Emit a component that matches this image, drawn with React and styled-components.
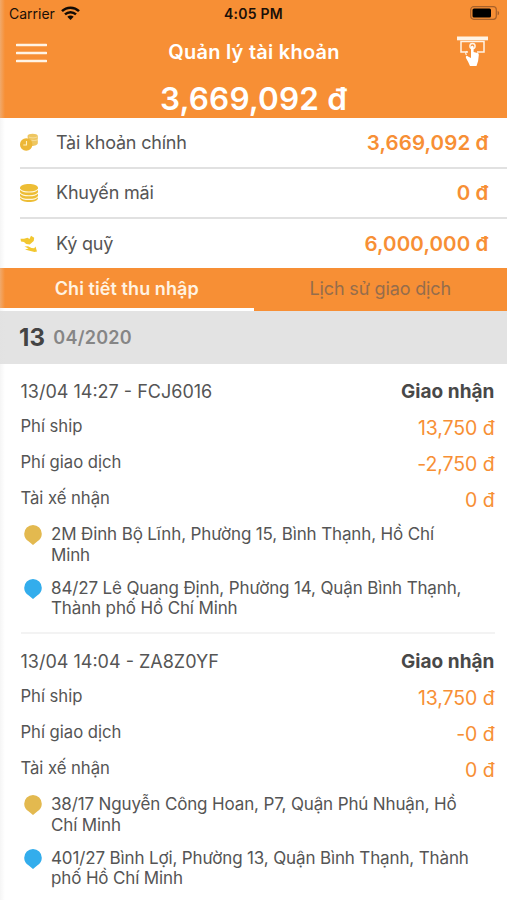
import React from 'react'
import styled, { createGlobalStyle, css } from 'styled-components'

const GlobalStyle = createGlobalStyle`
  * {
    box-sizing: border-box;
  }

  body {
    margin: 0;
    background: #fff;
    color: #555;
    font-family: Inter, Roboto, "Liberation Sans", sans-serif;
    -webkit-font-smoothing: antialiased;
  }
`;

const orange = '#f78f35'

const Screen = styled.div`
  position: relative;
  width: 507px;
  height: 900px;
  overflow: hidden;
  background: #fff;
`;

/* shadow of the closed side drawer */
const DrawerEdge = styled.div`
  position: absolute;
  top: 0;
  left: 0;
  width: 5px;
  height: 100%;
  background: linear-gradient(90deg, rgba(225, 225, 225, 0.32), rgba(225, 225, 225, 0));
`;

const Header = styled.header`
  height: 118px;
  background: ${orange};
  color: #fff;
`;

const StatusBar = styled.div`
  display: grid;
  grid-template-columns: 1fr auto 1fr;
  align-items: center;
  height: 27px;
  padding: 0 7px 0 9px;
  color: #1a1008;
  font-size: 14px;

  .carrier {
    display: flex;
    align-items: center;
    gap: 6px;
  }

  .battery {
    justify-self: end;
  }

  strong {
    margin-right: 2px;
    font-weight: 600;
    font-size: 14px;
    letter-spacing: 0.25px;
  }

  svg {
    display: block;
    margin-top: -1px;
  }
`;

const NavBar = styled.div`
  display: grid;
  grid-template-columns: 1fr auto 1fr;
  align-items: center;
  height: 49px;
  padding: 0 19px 0 16px;

  h1 {
    margin: 0 0 0 4px;
    font-size: 20px;
    font-weight: 600;
    line-height: 24px;
    letter-spacing: 0.25px;
  }

  svg {
    display: block;
  }

  svg:first-child {
    margin-top: 2px;
  }

  svg:last-child {
    justify-self: end;
  }
`;

const Total = styled.div`
  line-height: 45px;
  font-size: 31.5px;
  font-weight: 600;
  letter-spacing: 0.15px;
  text-align: center;
`;

const Wallets = styled.section`
  height: 150px;
`;

const WalletRow = styled.div`
  display: flex;
  align-items: center;
  height: ${(p) => (p.$last ? 49 : 50.5)}px;
  margin-left: 20px;
  padding-right: 18.5px;
  border-bottom: ${(p) => (p.$last ? 'none' : '2px solid #e1e1e1')};

  svg {
    flex: none;
    margin-right: 18px;
  }

  .name {
    flex: 1;
    font-size: 18px;
    letter-spacing: -0.2px;
  }

  .amount {
    color: ${orange};
    font-size: 20.5px;
    font-weight: 600;
    letter-spacing: 0.1px;
  }
`;

const Tabs = styled.nav`
  display: flex;
  height: 43px;
  background: ${orange};
`;

const Tab = styled.div`
  flex: 1;
  text-align: center;
  line-height: 42px;
  font-size: 18px;
  letter-spacing: -0.15px;
  color: #956d4c;
  border-bottom: 3px solid transparent;

  ${(p) => p.$active && css`
    color: #fff3e2;
    font-weight: 600;
    letter-spacing: 0.08px;
    border-color: #fff;
  `}
`;

const DateBar = styled.div`
  display: flex;
  align-items: center;
  gap: 8px;
  height: 53px;
  padding-left: 19px;
  line-height: 53px;
  background: #e3e3e3;
  color: #868686;
  font-size: 18px;
  font-weight: 600;
  letter-spacing: 0.25px;

  b {
    color: #444;
    font-size: 24px;
    font-weight: 700;
  }
`;

const Trip = styled.article`
  height: 270px;
  margin: 0 12.5px 0 20.5px;
  padding-top: 9px;
  border-bottom: 2px solid #f3f3f3;
`;

const Line = styled.div`
  display: flex;
  justify-content: space-between;
  align-items: center;
  height: 36px;
  padding-bottom: 2px;
  font-size: 16.7px;
  letter-spacing: -0.04px;

  span:last-child {
    color: ${orange};
    font-size: 19.5px;
    letter-spacing: -0.1px;
    padding-top: 3px;
  }
`;

const TripHead = styled(Line)`
  padding-bottom: 0;
  font-size: 18px;
  letter-spacing: 0;

  span:last-child {
    color: #484848;
    font-weight: 700;
    font-size: 19px;
    letter-spacing: 0.05px;
    padding-top: 1px;
  }
`;

const Stop = styled.div`
  display: flex;
  gap: 9.5px;
  height: 53.5px;
  padding: 7px 0 0 3px;
  font-size: 17px;
  line-height: 20.5px;
  letter-spacing: -0.14px;
  white-space: nowrap;

  svg {
    flex: none;
    margin-top: 1px;
  }
`;

const WifiIcon = () => (
  <svg width="19" height="14" viewBox="0 0 19 14">
    <g fill="none" stroke="#120b05" strokeWidth="2.5">
      <path d="M1 5.200C5.700.6 13.300.6 18 5.200" />
      <path d="M4 8.400C7.200 5.500 11.800 5.500 15 8.400" />
    </g>
    <path d="M6.300 10.800C8.200 9 10.800 9 12.700 10.800L9.500 14z" fill="#120b05" />
  </svg>
)

const BatteryIcon = () => (
  <svg width="30" height="14" viewBox="0 0 30 14">
    <rect x=".7" y=".7" width="25.600" height="12.600" rx="3" fill="none" stroke="#a8612a" strokeWidth="1.200" />
    <rect x="2.500" y="2.500" width="18.500" height="9" rx="1.500" fill="#000" />
    <path d="M27.600 4.700c2 .8 2 3.800 0 4.600z" fill="#a8612a" />
  </svg>
)

const MenuIcon = () => (
  <svg width="31" height="20" viewBox="0 0 31 20" stroke="#fff4e6" strokeWidth="2.600" strokeLinecap="round">
    <path d="M1 2h29M1 10h29M1 18h29" />
  </svg>
)

const WithdrawIcon = () => (
  <svg width="31" height="31" viewBox="0 0 31 31">
    <path d="M0 .5h31v3.800H0z" fill="#fff4e6" />
    <path d="M11 16H4V5.500h23V16h-7" fill="none" stroke="#fff4e6" strokeWidth="1.500" />
    <circle cx="15.500" cy="10" r="2.600" fill="none" stroke="#fff4e6" strokeWidth="1.500" />
    <path d="M14 11c0-1.700 2.600-1.700 2.600 0v5l4 1c1 .3 1.300 1 1.200 2l-.7 6-1.600 5h-6.500l-1.800-4-2.200-4c-.7-2 1-2.300 2-1.500l3 1.500z" fill="#fff" />
    <path d="M9.500 19c-1.300-1.500-1-3 .5-3.800" fill="none" stroke="#fff4e6" strokeWidth="1.200" />
  </svg>
)

const MainIcon = () => (
  <svg width="18" height="18" viewBox="0 0 18 18">
    <path d="M7.500 3c0-3 10.300-3 10.300 0v7c0 2-3 3-6 3L8 8z" fill="#eec661" />
    <path d="M9 4c2 1.200 6 1.200 8 0M11.500 7.200c2 .5 4.500.3 6.500-.5" fill="none" stroke="#fbe8b4" strokeWidth=".7" />
    <circle cx="6.200" cy="11.500" r="6.200" fill="#edb736" />
    <path d="M6.500 8v4H3.300" fill="none" stroke="#fff0c0" strokeWidth="1.100" />
  </svg>
)

const CoinsIcon = () => (
  <svg width="18" height="18" viewBox="0 0 18 18">
    <path d="M0 4C0-1.300 18-1.300 18 4v10c0 5.300-18 5.300-18 0z" fill="#edbd35" />
    <path d="M0 5c2 4 16 4 18 0M0 8.700c2 4 16 4 18 0M0 12.400c2 4 16 4 18 0" fill="none" stroke="#fff8e0" strokeWidth="1.100" />
  </svg>
)

const DepositIcon = () => (
  <svg width="18" height="18" viewBox="0 0 18 18">
    <path d="M.5 3.800l3.500 0 3.500-1L9.500 4l1.500-3.300 3.200 2-.5 3.300-4 3.500-3.500-.5L4 7 1 6.500z" fill="#f2c730" />
    <path d="M4.500 11.500l3.500-.3 3.500 1.800 2.700.2L15.500 11.500l1.500 5-2.500.5-5-1.300-4.500-1.200 3.500-1z" fill="#f2c730" />
  </svg>
)

const PinIcon = ({ color }) => (
  <svg width="18" height="20" viewBox="0 0 18 20">
    <path d="M9 0a8.800 8.800 0 0 1 8.800 8.800c0 3.500-1.800 6-4.300 7.500L9 20l-4.500-3.700C2 14.800.2 12.300.2 8.800A8.800 8.800 0 0 1 9 0z" fill={color} />
  </svg>
)

const wallets = [
  { icon: <MainIcon />, name: 'Tài khoản chính', amount: '3,669,092 đ' },
  { icon: <CoinsIcon />, name: 'Khuyến mãi', amount: '0 đ' },
  { icon: <DepositIcon />, name: 'Ký quỹ', amount: '6,000,000 đ' },
]

const trips = [
  {
    code: '13/04 14:27 - FCJ6016',
    fees: ['13,750 đ', '-2,750 đ', '0 đ'],
    from: ['2M Đinh Bộ Lĩnh, Phường 15, Bình Thạnh, Hồ Chí', 'Minh'],
    to: ['84/27 Lê Quang Định, Phường 14, Quận Bình Thạnh,', 'Thành phố Hồ Chí Minh'],
  },
  {
    code: '13/04 14:04 - ZA8Z0YF',
    fees: ['13,750 đ', '-0 đ', '0 đ'],
    from: ['38/17 Nguyễn Công Hoan, P7, Quận Phú Nhuận, Hồ', 'Chí Minh'],
    to: ['401/27 Bình Lợi, Phường 13, Quận Bình Thạnh, Thành', 'phố Hồ Chí Minh'],
  },
]

const feeNames = ['Phí ship', 'Phí giao dịch', 'Tài xế nhận']

const Address = ({ color, lines }) => (
  <Stop>
    <PinIcon color={color} />
    <span>{lines[0]}<br />{lines[1]}</span>
  </Stop>
)

const App = () => {
  return (
    <Screen>
      <GlobalStyle />
      <Header>
        <StatusBar>
          <div className="carrier">Carrier <WifiIcon /></div>
          <strong>4:05 PM</strong>
          <div className="battery"><BatteryIcon /></div>
        </StatusBar>
        <NavBar>
          <MenuIcon />
          <h1>Quản lý tài khoản</h1>
          <WithdrawIcon />
        </NavBar>
        <Total>3,669,092 đ</Total>
      </Header>
      <Wallets>
        {wallets.map((w, i) => (
          <WalletRow key={w.name} $last={i === wallets.length - 1}>
            {w.icon}
            <span className="name">{w.name}</span>
            <span className="amount">{w.amount}</span>
          </WalletRow>
        ))}
      </Wallets>
      <Tabs>
        <Tab $active>Chi tiết thu nhập</Tab>
        <Tab>Lịch sử giao dịch</Tab>
      </Tabs>
      <DateBar><b>13</b> 04/2020</DateBar>
      {trips.map((trip) => (
        <Trip key={trip.code}>
          <TripHead>
            <span>{trip.code}</span>
            <span>Giao nhận</span>
          </TripHead>
          {feeNames.map((name, i) => (
            <Line key={name}>
              <span>{name}</span>
              <span>{trip.fees[i]}</span>
            </Line>
          ))}
          <Address color="#e3b94f" lines={trip.from} />
          <Address color="#33adec" lines={trip.to} />
        </Trip>
      ))}
      <DrawerEdge />
    </Screen>
  )
}

export default App
